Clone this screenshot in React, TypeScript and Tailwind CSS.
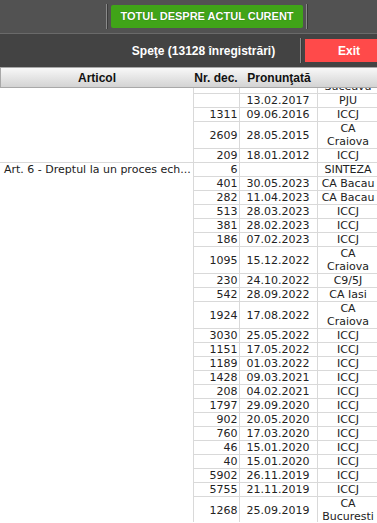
import React from 'react';

type Row = { nr: string; data: string; instanta: string[] };

const grup1: Row[] = [
   { nr: '', data: '', instanta: ['CA', 'Suceava'] },
   { nr: '', data: '13.02.2017', instanta: ['PJU'] },
   { nr: '1311', data: '09.06.2016', instanta: ['ICCJ'] },
   { nr: '2609', data: '28.05.2015', instanta: ['CA', 'Craiova'] },
   { nr: '209', data: '18.01.2012', instanta: ['ICCJ'] },
];

const grup2: Row[] = [
   { nr: '6', data: '', instanta: ['SINTEZA'] },
   { nr: '401', data: '30.05.2023', instanta: ['CA Bacau'] },
   { nr: '282', data: '11.04.2023', instanta: ['CA Bacau'] },
   { nr: '513', data: '28.03.2023', instanta: ['ICCJ'] },
   { nr: '381', data: '28.02.2023', instanta: ['ICCJ'] },
   { nr: '186', data: '07.02.2023', instanta: ['ICCJ'] },
   { nr: '1095', data: '15.12.2022', instanta: ['CA', 'Craiova'] },
   { nr: '230', data: '24.10.2022', instanta: ['C9/5J'] },
   { nr: '542', data: '28.09.2022', instanta: ['CA Iasi'] },
   { nr: '1924', data: '17.08.2022', instanta: ['CA', 'Craiova'] },
   { nr: '3030', data: '25.05.2022', instanta: ['ICCJ'] },
   { nr: '1151', data: '17.05.2022', instanta: ['ICCJ'] },
   { nr: '1189', data: '01.03.2022', instanta: ['ICCJ'] },
   { nr: '1428', data: '09.03.2021', instanta: ['ICCJ'] },
   { nr: '208', data: '04.02.2021', instanta: ['ICCJ'] },
   { nr: '1797', data: '29.09.2020', instanta: ['ICCJ'] },
   { nr: '902', data: '20.05.2020', instanta: ['ICCJ'] },
   { nr: '760', data: '17.03.2020', instanta: ['ICCJ'] },
   { nr: '46', data: '15.01.2020', instanta: ['ICCJ'] },
   { nr: '40', data: '15.01.2020', instanta: ['ICCJ'] },
   { nr: '5902', data: '26.11.2019', instanta: ['ICCJ'] },
   { nr: '5755', data: '21.11.2019', instanta: ['ICCJ'] },
   { nr: '1268', data: '25.09.2019', instanta: ['CA', 'Bucuresti'] },
];

const Sep = () => (
   <div className="h-[25px] w-[2px] border-l border-r border-l-[#8a8a8a] border-r-[#3a3a3a]" />
);

const Celule = ({ r }: { r: Row }) => (
   <>
      <td className="border border-[#d9d9d9] pr-[1px] text-right">{r.nr}</td>
      <td className="border border-[#d9d9d9] text-center">{r.data}</td>
      <td className="border border-[#d9d9d9] text-center whitespace-nowrap">
         {r.instanta.map((l, i) => (
            <div key={i}>{l}</div>
         ))}
      </td>
   </>
);

export default function App() {
   return (
      <div className="w-[377px] h-[523px] overflow-hidden bg-white">
         <div className="w-[395px]">
            {/* bara de sus */}
            <div className="flex h-[34px] items-center border-b border-[#6a6a6a] bg-[#525252]">
               <div className="w-[106px]" />
               <Sep />
               <div className="ml-[3px] flex h-[23px] w-[192px] items-center justify-center rounded-[2px] bg-[#40a418] font-['Liberation_Sans',sans-serif] text-[11px] font-bold text-white [text-shadow:0_0_1px_#1d5a08]">
                  TOTUL DESPRE ACTUL CURENT
               </div>
               <div className="ml-[3px]">
                  <Sep />
               </div>
            </div>

            {/* bara cu titlul */}
            <div className="flex h-[33px] items-center bg-[#434343]">
               <div className="w-[107px]" />
               <div className="w-[193px] text-center font-['Liberation_Sans',sans-serif] text-[12px] font-bold text-white">
                  Speţe (13128 înregistrări)
               </div>
               <Sep />
               <div className="ml-[3px] flex h-[23px] w-[88px] items-center justify-center bg-[#ff4a4a] font-['Liberation_Sans',sans-serif] text-[12px] font-bold text-white">
                  Exit
               </div>
            </div>

            {/* cap de tabel */}
            <div className="flex h-[21px] items-center border border-[#a8a8a8] bg-linear-to-b from-[#f8f8f8] to-[#d3d3d3] font-['Liberation_Sans',sans-serif] text-[12px] font-bold text-[#111]">
               <div className="w-[192px] text-center">Articol</div>
               <div className="w-[46px] text-center">Nr. dec.</div>
               <div className="w-[80px] text-center">Pronunţată</div>
               <div className="flex-1" />
            </div>

            {/* corp */}
            <div className="h-[434px] overflow-hidden">
               <table className="-mt-[22px] w-[379px] table-fixed border-collapse font-['DejaVu_Sans',sans-serif] text-[11px] leading-[13px] text-[#222]">
                  <colgroup>
                     <col className="w-[193px]" />
                     <col className="w-[46px]" />
                     <col className="w-[78px]" />
                     <col className="w-[62px]" />
                  </colgroup>
                  <tbody>
                     {grup1.map((r, i) => (
                        <tr key={'a' + i}>
                           {i === 0 && (
                              <td rowSpan={grup1.length} className="border-r border-b border-[#d9d9d9]" />
                           )}
                           <Celule r={r} />
                        </tr>
                     ))}
                     {grup2.map((r, i) => (
                        <tr key={'b' + i}>
                           {i === 0 && (
                              <td rowSpan={grup2.length} className="border-r border-t border-[#d9d9d9] align-top">
                                 <div className="overflow-hidden whitespace-nowrap pl-[4px]">Art. 6 - Dreptul la un proces ech...</div>
                              </td>
                           )}
                           <Celule r={r} />
                        </tr>
                     ))}
                  </tbody>
               </table>
            </div>
         </div>
      </div>
   );
}
